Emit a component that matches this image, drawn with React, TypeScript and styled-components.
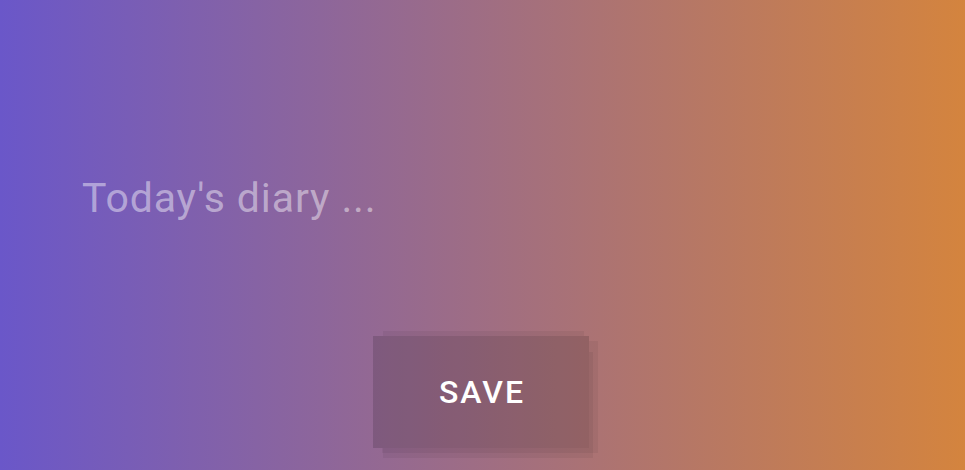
import React from "react";
import styled, { createGlobalStyle } from "styled-components";

const Global = createGlobalStyle`
  html, body { margin: 0; padding: 0; }
  body { font-family: Roboto, "Liberation Sans", sans-serif; }
`;

const Screen = styled.div`
  width: 965px;
  height: 470px;
  background: linear-gradient(90deg, #6a57c9 0%, #d4843e 100%);
  display: flex;
  flex-direction: column;
  align-items: center;
  box-sizing: border-box;
  padding-top: 168px;
  overflow: hidden;
`;

const Diary = styled.textarea`
  align-self: stretch;
  margin: 0 82px;
  height: 60px;
  padding: 0;
  border: none;
  outline: none;
  resize: none;
  background: transparent;
  font-family: Roboto, "Liberation Sans", sans-serif;
  font-size: 41px;
  letter-spacing: 0.9px;
  line-height: 60px;
  color: #fff;
  &::placeholder {
    color: rgba(255, 255, 255, 0.46);
  }
`;

const SaveButton = styled.button`
  margin-top: 108px;
  margin-right: 3px;
  width: 216px;
  height: 112px;
  padding: 0;
  border: none;
  background: rgba(0, 0, 0, 0.14);
  box-shadow: 2.5px -12.5px 0 -7.5px rgba(0, 0, 0, 0.05),
    9px 5px 0 0 rgba(0, 0, 0, 0.05),
    7px 13px 0 -3px rgba(0, 0, 0, 0.05);
  color: #fff;
  font-family: Roboto, "Liberation Sans", sans-serif;
  font-weight: 500;
  font-size: 32px;
  letter-spacing: 2px;
  text-indent: 2px;
  cursor: pointer;
`;

export default function App() {
  return (
    <>
      <Global />
      <Screen>
        <Diary placeholder="Today's diary ..." />
        <SaveButton>SAVE</SaveButton>
      </Screen>
    </>
  );
}
